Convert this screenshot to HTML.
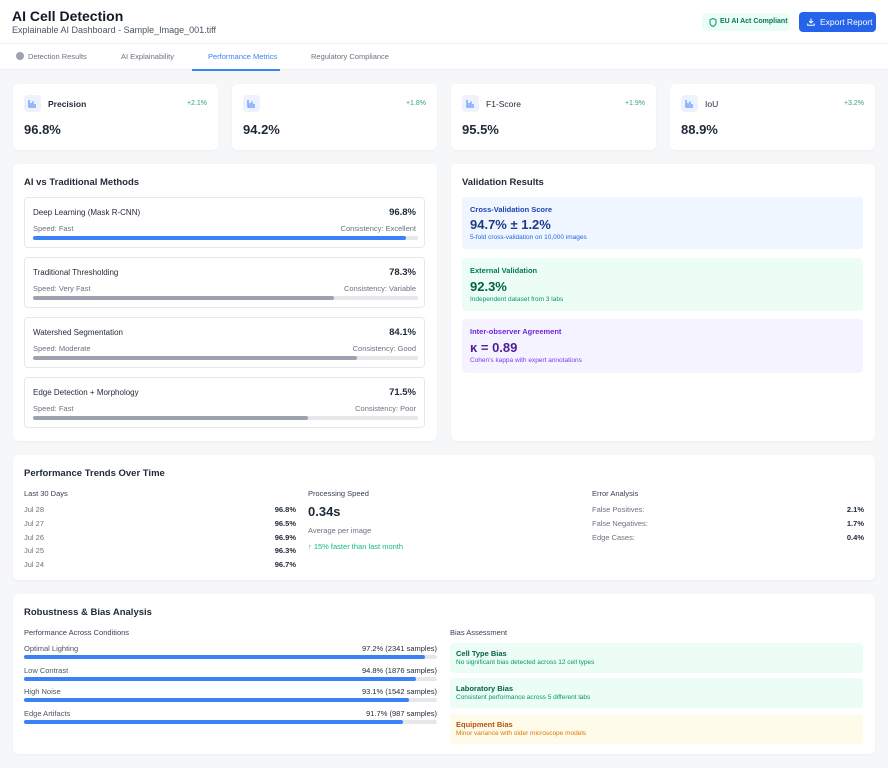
<!DOCTYPE html>
<html><head><meta charset="utf-8"><style>
*{box-sizing:border-box;margin:0;padding:0}
body{width:888px;height:768px;background:#f6f7f9;font-family:"Liberation Sans",sans-serif;color:#1f2937;position:relative;overflow:hidden}
.a{position:absolute;white-space:nowrap}
.card{position:absolute;background:#fff;border-radius:6px;box-shadow:0 1px 2px rgba(0,0,0,.04)}
.t{font-size:9.5px;font-weight:bold;color:#1f2937}
.s{font-size:7.5px;color:#6b7280}
.bar{position:absolute;height:4px;border-radius:2px;background:#e5e7eb}
.bar i{display:block;height:4px;border-radius:2px}
.box{position:absolute;border:1px solid #e5e7eb;border-radius:4px;left:11px;width:401px;height:51px}
.ico{position:absolute;left:11px;top:11px;width:17px;height:17px;border-radius:4px;background:#eef2ff}
.g{position:absolute;right:11px;top:16px;font-size:7px;color:#34a376}
</style></head><body>
<div class="a" style="left:0;top:0;width:888px;height:70px;background:#fff;border-bottom:1px solid #eceef1"></div>
<div class="a" style="left:0;top:43px;width:888px;height:1px;background:#eceef1"></div>
<div class="a" style="left:12px;top:8px;font-size:14px;font-weight:bold;color:#111827">AI Cell Detection</div>
<div class="a" style="left:12px;top:25px;font-size:9px;color:#4b5563">Explainable AI Dashboard - Sample_Image_001.tiff</div>
<div class="a" style="left:702px;top:13px;width:88px;height:18px;background:#ecfdf5;border-radius:4px;font-size:7px;color:#047857;font-weight:bold;line-height:18px;padding-left:18px">EU AI Act Compliant
<svg class="a" style="left:7px;top:5px" width="8" height="9" viewBox="0 0 8 9"><path d="M4 .5L7 1.7V4.5C7 6.5 5.7 7.8 4 8.5 2.3 7.8 1 6.5 1 4.5V1.7Z" fill="none" stroke="#059669" stroke-width="1"/></svg></div>
<div class="a" style="left:799px;top:12px;width:77px;height:20px;background:#2563eb;border-radius:4px;font-size:8.5px;color:#fff;line-height:20px;padding-left:21px">Export Report
<svg class="a" style="left:8px;top:6px" width="8" height="8" viewBox="0 0 8 8"><path d="M4 0.5V5M2 3L4 5 6 3M0.7 5.5V7.3H7.3V5.5" fill="none" stroke="#fff" stroke-width="1"/></svg></div>
<div class="a" style="left:16px;top:52px;width:8px;height:8px;border-radius:50%;background:#9ca3af"></div>
<div class="a s" style="left:28px;top:52px;color:#6b7280">Detection Results</div>
<div class="a s" style="left:121px;top:52px">AI Explainability</div>
<div class="a s" style="left:208px;top:52px;color:#3b82f6">Performance Metrics</div>
<div class="a s" style="left:311px;top:52px">Regulatory Compliance</div>
<div class="a" style="left:192px;top:69px;width:88px;height:2px;background:#3b82f6"></div>

<div class="card" style="left:13px;top:84px;width:205px;height:66px"><div class="ico"></div><div class="a t" style="left:35px;top:15px;font-size:8.5px">Precision</div><div class="g">+2.1%</div><div class="a" style="left:11px;top:38px;font-size:13px;font-weight:bold">96.8%</div></div>
<div class="card" style="left:232px;top:84px;width:205px;height:66px"><div class="ico"></div><div class="g">+1.8%</div><div class="a" style="left:11px;top:38px;font-size:13px;font-weight:bold">94.2%</div></div>
<div class="card" style="left:451px;top:84px;width:205px;height:66px"><div class="ico"></div><div class="a t" style="left:35px;top:15px;font-size:8.5px;font-weight:normal">F1-Score</div><div class="g">+1.9%</div><div class="a" style="left:11px;top:38px;font-size:13px;font-weight:bold">95.5%</div></div>
<div class="card" style="left:670px;top:84px;width:205px;height:66px"><div class="ico"></div><div class="a t" style="left:35px;top:15px;font-size:8.5px;font-weight:normal">IoU</div><div class="g">+3.2%</div><div class="a" style="left:11px;top:38px;font-size:13px;font-weight:bold">88.9%</div></div>

<div class="card" style="left:13px;top:164px;width:424px;height:277px">
<div class="a t" style="left:11px;top:13px">AI vs Traditional Methods</div>
<div class="box" style="top:33px"><div class="a" style="left:8px;top:10px;font-size:8px">Deep Learning (Mask R-CNN)</div><div class="a" style="right:8px;top:9px;font-size:9.5px;font-weight:bold">96.8%</div><div class="a s" style="left:8px;top:26px">Speed: Fast</div><div class="a s" style="right:8px;top:26px">Consistency: Excellent</div><div class="bar" style="left:8px;top:38px;width:385px"><i style="width:96.8%;background:#3b82f6"></i></div></div>
<div class="box" style="top:93px"><div class="a" style="left:8px;top:10px;font-size:8px">Traditional Thresholding</div><div class="a" style="right:8px;top:9px;font-size:9.5px;font-weight:bold">78.3%</div><div class="a s" style="left:8px;top:26px">Speed: Very Fast</div><div class="a s" style="right:8px;top:26px">Consistency: Variable</div><div class="bar" style="left:8px;top:38px;width:385px"><i style="width:78.3%;background:#9ca3af"></i></div></div>
<div class="box" style="top:153px"><div class="a" style="left:8px;top:10px;font-size:8px">Watershed Segmentation</div><div class="a" style="right:8px;top:9px;font-size:9.5px;font-weight:bold">84.1%</div><div class="a s" style="left:8px;top:26px">Speed: Moderate</div><div class="a s" style="right:8px;top:26px">Consistency: Good</div><div class="bar" style="left:8px;top:38px;width:385px"><i style="width:84.1%;background:#9ca3af"></i></div></div>
<div class="box" style="top:213px"><div class="a" style="left:8px;top:10px;font-size:8px">Edge Detection + Morphology</div><div class="a" style="right:8px;top:9px;font-size:9.5px;font-weight:bold">71.5%</div><div class="a s" style="left:8px;top:26px">Speed: Fast</div><div class="a s" style="right:8px;top:26px">Consistency: Poor</div><div class="bar" style="left:8px;top:38px;width:385px"><i style="width:71.5%;background:#9ca3af"></i></div></div>
</div>

<div class="card" style="left:451px;top:164px;width:424px;height:277px">
<div class="a t" style="left:11px;top:13px">Validation Results</div>
<div class="a" style="left:11px;top:33px;width:401px;height:52px;background:#eff6ff;border-radius:4px"><div class="a" style="left:8px;top:8px;font-size:7.5px;font-weight:bold;color:#1e40af">Cross-Validation Score</div><div class="a" style="left:8px;top:20px;font-size:13px;font-weight:bold;color:#1e3a8a">94.7% ± 1.2%</div><div class="a" style="left:8px;top:37px;font-size:6.5px;color:#2563eb">5-fold cross-validation on 10,000 images</div></div>
<div class="a" style="left:11px;top:94px;width:401px;height:53px;background:#ecfdf5;border-radius:4px"><div class="a" style="left:8px;top:8px;font-size:7.5px;font-weight:bold;color:#047857">External Validation</div><div class="a" style="left:8px;top:21px;font-size:13px;font-weight:bold;color:#065f46">92.3%</div><div class="a" style="left:8px;top:38px;font-size:6.5px;color:#059669">Independent dataset from 3 labs</div></div>
<div class="a" style="left:11px;top:155px;width:401px;height:54px;background:#f5f3ff;border-radius:4px"><div class="a" style="left:8px;top:8px;font-size:7.5px;font-weight:bold;color:#6d28d9">Inter-observer Agreement</div><div class="a" style="left:8px;top:21px;font-size:13px;font-weight:bold;color:#4c1d95">κ = 0.89</div><div class="a" style="left:8px;top:38px;font-size:6.5px;color:#7c3aed">Cohen's kappa with expert annotations</div></div>
</div>

<div class="card" style="left:13px;top:455px;width:862px;height:125px">
<div class="a t" style="left:11px;top:13px">Performance Trends Over Time</div>
<div class="a" style="left:11px;top:34px;font-size:7.5px;color:#374151">Last 30 Days</div>
<div class="a s" style="left:11px;top:50px">Jul 28</div><div class="a" style="left:240px;width:43px;top:50px;font-size:7.5px;font-weight:bold;text-align:right">96.8%</div>
<div class="a s" style="left:11px;top:64px">Jul 27</div><div class="a" style="left:240px;width:43px;top:64px;font-size:7.5px;font-weight:bold;text-align:right">96.5%</div>
<div class="a s" style="left:11px;top:78px">Jul 26</div><div class="a" style="left:240px;width:43px;top:78px;font-size:7.5px;font-weight:bold;text-align:right">96.9%</div>
<div class="a s" style="left:11px;top:91px">Jul 25</div><div class="a" style="left:240px;width:43px;top:91px;font-size:7.5px;font-weight:bold;text-align:right">96.3%</div>
<div class="a s" style="left:11px;top:105px">Jul 24</div><div class="a" style="left:240px;width:43px;top:105px;font-size:7.5px;font-weight:bold;text-align:right">96.7%</div>
<div class="a" style="left:295px;top:34px;font-size:7.5px;color:#374151">Processing Speed</div>
<div class="a" style="left:295px;top:49px;font-size:13px;font-weight:bold">0.34s</div>
<div class="a s" style="left:295px;top:71px">Average per image</div>
<div class="a" style="left:295px;top:87px;font-size:7.5px;color:#10b981">↑ 15% faster than last month</div>
<div class="a" style="left:579px;top:34px;font-size:7.5px;color:#374151">Error Analysis</div>
<div class="a s" style="left:579px;top:50px">False Positives:</div><div class="a" style="right:11px;top:50px;font-size:7.5px;font-weight:bold">2.1%</div>
<div class="a s" style="left:579px;top:64px">False Negatives:</div><div class="a" style="right:11px;top:64px;font-size:7.5px;font-weight:bold">1.7%</div>
<div class="a s" style="left:579px;top:78px">Edge Cases:</div><div class="a" style="right:11px;top:78px;font-size:7.5px;font-weight:bold">0.4%</div>
</div>

<div class="card" style="left:13px;top:594px;width:862px;height:160px">
<div class="a t" style="left:11px;top:13px">Robustness &amp; Bias Analysis</div>
<div class="a" style="left:11px;top:34px;font-size:7.5px;color:#374151">Performance Across Conditions</div>
<div class="a s" style="left:11px;top:50px;color:#4b5563">Optimal Lighting</div><div class="a" style="right:438px;top:50px;font-size:7.5px">97.2% (2341 samples)</div><div class="bar" style="left:11px;top:61px;width:413px"><i style="width:97.2%;background:#3b82f6"></i></div>
<div class="a s" style="left:11px;top:72px;color:#4b5563">Low Contrast</div><div class="a" style="right:438px;top:72px;font-size:7.5px">94.8% (1876 samples)</div><div class="bar" style="left:11px;top:83px;width:413px"><i style="width:94.8%;background:#3b82f6"></i></div>
<div class="a s" style="left:11px;top:93px;color:#4b5563">High Noise</div><div class="a" style="right:438px;top:93px;font-size:7.5px">93.1% (1542 samples)</div><div class="bar" style="left:11px;top:104px;width:413px"><i style="width:93.1%;background:#3b82f6"></i></div>
<div class="a s" style="left:11px;top:115px;color:#4b5563">Edge Artifacts</div><div class="a" style="right:438px;top:115px;font-size:7.5px">91.7% (987 samples)</div><div class="bar" style="left:11px;top:126px;width:413px"><i style="width:91.7%;background:#3b82f6"></i></div>
<div class="a" style="left:437px;top:34px;font-size:7.5px;color:#374151">Bias Assessment</div>
<div class="a" style="left:437px;top:49px;width:413px;height:30px;background:#ecfdf5;border-radius:4px"><div class="a" style="left:6px;top:6px;font-size:7.5px;font-weight:bold;color:#065f46">Cell Type Bias</div><div class="a" style="left:6px;top:16px;font-size:6.5px;color:#059669">No significant bias detected across 12 cell types</div></div>
<div class="a" style="left:437px;top:84px;width:413px;height:30px;background:#ecfdf5;border-radius:4px"><div class="a" style="left:6px;top:6px;font-size:7.5px;font-weight:bold;color:#065f46">Laboratory Bias</div><div class="a" style="left:6px;top:16px;font-size:6.5px;color:#059669">Consistent performance across 5 different labs</div></div>
<div class="a" style="left:437px;top:120px;width:413px;height:30px;background:#fffbeb;border-radius:4px"><div class="a" style="left:6px;top:6px;font-size:7.5px;font-weight:bold;color:#b45309">Equipment Bias</div><div class="a" style="left:6px;top:16px;font-size:6.5px;color:#d97706">Minor variance with older microscope models</div></div>
</div>
<svg class="a" style="left:28px;top:99px" width="9" height="9" viewBox="0 0 9 9"><path d="M1 1V8H8M3 7V4M5 7V2.5M7 7V5" stroke="#3b82f6" stroke-width="1" fill="none"/></svg>
<svg class="a" style="left:247px;top:99px" width="9" height="9" viewBox="0 0 9 9"><path d="M1 1V8H8M3 7V4M5 7V2.5M7 7V5" stroke="#3b82f6" stroke-width="1" fill="none"/></svg>
<svg class="a" style="left:466px;top:99px" width="9" height="9" viewBox="0 0 9 9"><path d="M1 1V8H8M3 7V4M5 7V2.5M7 7V5" stroke="#3b82f6" stroke-width="1" fill="none"/></svg>
<svg class="a" style="left:685px;top:99px" width="9" height="9" viewBox="0 0 9 9"><path d="M1 1V8H8M3 7V4M5 7V2.5M7 7V5" stroke="#3b82f6" stroke-width="1" fill="none"/></svg>
</body></html>
